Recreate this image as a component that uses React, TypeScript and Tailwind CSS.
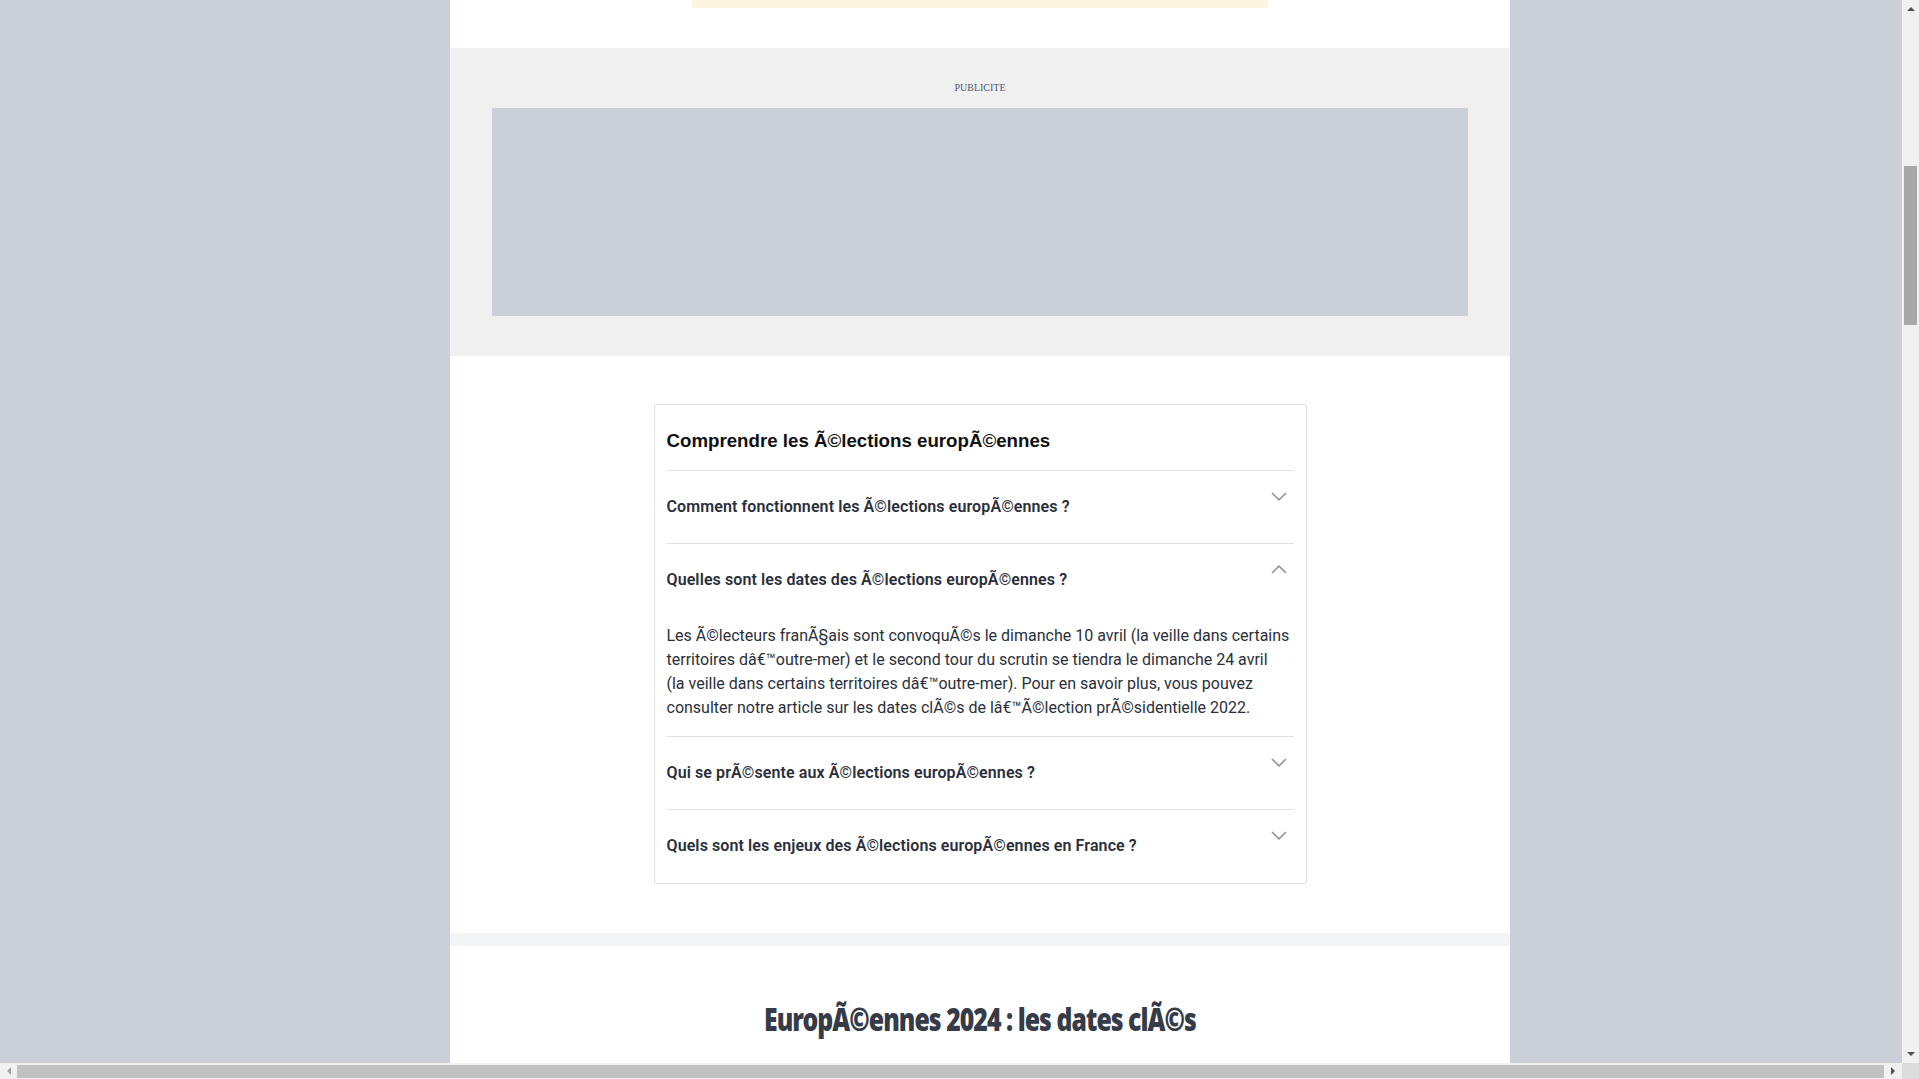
const condensed = { fontFamily: 'Roboto, "Liberation Sans", sans-serif' };

type Item = {
  question: string;
  answer?: string;
};

const items: Item[] = [
  { question: "Comment fonctionnent les Ã©lections europÃ©ennes ?" },
  {
    question: "Quelles sont les dates des Ã©lections europÃ©ennes ?",
    answer:
      "Les Ã©lecteurs franÃ§ais sont convoquÃ©s le dimanche 10 avril (la veille dans certains territoires dâ€™outre-mer) et le second tour du scrutin se tiendra le dimanche 24 avril (la\u00a0veille dans certains territoires dâ€™outre-mer). Pour en savoir plus, vous pouvez consulter notre article sur les dates clÃ©s de lâ€™Ã©lection prÃ©sidentielle 2022.",
  },
  { question: "Qui se prÃ©sente aux Ã©lections europÃ©ennes ?" },
  { question: "Quels sont les enjeux des Ã©lections europÃ©ennes en France ?" },
];

function Chevron({ up }: { up?: boolean }) {
  return (
    <svg width="16" height="9" viewBox="0 0 16 9" className="mr-[7px] mt-[-3px] shrink-0">
      <path d={up ? "M1 8L8 1.2L15 8" : "M1 1L8 7.8L15 1"} fill="none" stroke="#959595" strokeWidth="1.6" />
    </svg>
  );
}

function Faq() {
  return (
    <div className="mx-auto w-[653px] rounded-[2px] border border-[#e2e2e2] px-[12px] pb-[1px]">
      <h3 className="pb-[17px] pt-[24px] text-[18.7px] font-bold leading-[24px] text-[#111]" style={{ fontFamily: '"Liberation Sans", Arial, sans-serif' }}>
        Comprendre les Ã©lections europÃ©ennes
      </h3>
      {items.map((item) => (
        <div key={item.question} className={`border-t border-[#e2e2e2] pt-[24px] ${item.answer ? "pb-[16px]" : "pb-[24px]"}`}>
          <div className="flex items-start justify-between">
            <p className="text-[16px] font-semibold leading-[24px] tracking-[0.1px] text-[#2b2f3a]" style={condensed}>
              {item.question}
            </p>
            <Chevron up={!!item.answer} />
          </div>
          {item.answer ? (
            <p className="mt-[32px] text-[16px] leading-[24px] text-[#2b2f3a]" style={condensed}>
              {item.answer}
            </p>
          ) : null}
        </div>
      ))}
    </div>
  );
}

function VerticalScrollbar() {
  return (
    <div className="flex w-[17px] shrink-0 flex-col items-center bg-[#f1f1f1]">
      <div className="mt-[7px] h-0 w-0 border-x-[4px] border-b-[4px] border-x-transparent border-b-[#505050]" />
      <div className="ml-[2px] mt-[155px] h-[159px] w-[13px] self-start bg-[#a8a8a8]" />
      <div className="flex-1" />
      <div className="mb-[7px] h-0 w-0 border-x-[4px] border-t-[4px] border-x-transparent border-t-[#505050]" />
    </div>
  );
}

function HorizontalScrollbar() {
  return (
    <div className="flex h-[16px] shrink-0 bg-[#f1f1f1]">
      <div className="flex w-[17px] items-center justify-center">
        <div className="h-0 w-0 border-y-[4px] border-r-[4px] border-y-transparent border-r-[#a3a3a3]" />
      </div>
      <div className="mt-[2px] h-[13px] flex-1 bg-[#c1c1c1]" />
      <div className="flex w-[18px] items-center justify-center">
        <div className="h-0 w-0 border-y-[4px] border-l-[4px] border-y-transparent border-l-[#505050]" />
      </div>
      <div className="w-[17px] bg-[#dcdcdc]" />
    </div>
  );
}

export default function App() {
  return (
    <div className="flex h-screen w-screen flex-col overflow-hidden bg-[#cbcfd8]">
      <div className="flex min-h-0 flex-1">
        <div className="min-w-0 flex-1 overflow-hidden">
          <main className="ml-[450px] w-[1060px] bg-white">
            <div className="h-[48px]">
              <div className="mx-auto h-[8px] w-[576px] bg-[#fdf4e1]" />
            </div>

            <section className="bg-[#f0f0f0] px-[42px] pb-[40px] pt-[34px]">
              <p className="mb-[14px] text-center text-[10px] leading-[12px] text-[#4f5b70]" style={{ fontFamily: '"Liberation Serif", serif' }}>
                PUBLICITE
              </p>
              <div className="h-[208px] bg-[#cbcfd8]" />
            </section>

            <section className="pb-[49px] pt-[48px]">
              <Faq />
            </section>

            <div className="h-[13px] bg-[#f3f4f6]" />

            <section className="pb-[40px] pt-[55px] text-center">
              <h2
                className="inline-block origin-center scale-x-[0.8] text-[31px] font-black leading-[36px] tracking-[-1.2px] text-[#363b48]"
                style={{ fontFamily: '"Noto Sans", sans-serif' }}
              >
                EuropÃ©ennes 2024 : les dates clÃ©s
              </h2>
            </section>
          </main>
        </div>
        <VerticalScrollbar />
      </div>
      <HorizontalScrollbar />
    </div>
  );
}
